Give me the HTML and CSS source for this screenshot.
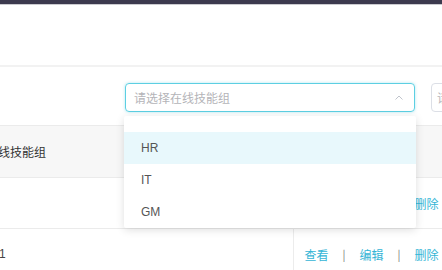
FILE: index.html
```html
<!DOCTYPE html>
<html lang="zh-CN">
<head>
<meta charset="UTF-8" />
<title>在线技能组</title>
<link rel="stylesheet" href="styles.css">
</head>
<body>

<div class="topbar"></div>
<div class="page-head"></div>
<div class="divider"></div>

<div class="toolbar">
  <div class="select open">
    <span class="placeholder">请选择在线技能组</span>
    <svg class="arrow" width="8" height="5" viewBox="0 0 8 5"><path d="M0.5 4.5 L4 1 L7.5 4.5" fill="none" stroke="#c0c4cc" stroke-width="1"/></svg>
    <ul class="dropdown">
      <li class="hover">HR</li>
      <li>IT</li>
      <li>GM</li>
    </ul>
  </div>
  <div class="input"><span class="placeholder">请输入</span></div>
</div>

<table class="grid">
  <tr class="head">
    <th class="col-name">在线技能组</th>
    <th class="col-ops">操作</th>
  </tr>
  <tr>
    <td class="col-name"></td>
    <td class="col-ops">
      <div class="ops"><a>查看</a><span class="sep">|</span><a>编辑</a><span class="sep">|</span><a>删除</a></div>
    </td>
  </tr>
  <tr>
    <td class="col-name"><span class="num">1</span></td>
    <td class="col-ops">
      <div class="ops"><a>查看</a><span class="sep">|</span><a>编辑</a><span class="sep">|</span><a>删除</a></div>
    </td>
  </tr>
</table>

</body>
</html>
```

FILE: styles.css
```css
body {
  margin: 0;
  width: 442px;
  height: 270px;
  overflow: hidden;
  background-color: #fff;
  font-family: "Liberation Sans", "Noto Sans CJK SC", sans-serif;
  font-size: 12px;
  color: #333;
}

.topbar {
  height: 4px;
  background-color: #3c3a4e;
  border-bottom: 1px solid #cbcbd0;
}

.page-head { height: 60px; background-color: #fff; }
.divider { height: 2px; background-color: #f2f2f2; }

.toolbar {
  display: flex;
  gap: 16px;
  padding: 16px 0 0 125px;
  height: 29px;
  position: relative;
  z-index: 5;
}

.select {
  position: relative;
  flex: 0 0 auto;
  box-sizing: border-box;
  width: 290px;
  height: 29px;
  border: 1px solid #5ccfe2;
  border-radius: 4px;
  box-shadow: 0 0 3px rgba(92, 207, 226, 0.5);
  display: flex;
  align-items: center;
  padding: 0 10px 0 8px;
}

.placeholder {
  color: #b4b4b8;
  white-space: nowrap;
  font-family: "Noto Sans CJK SC", sans-serif;
}

.select .placeholder { flex: 1; }
.arrow { margin-right: 1px; margin-top: -1px; }

.input {
  flex: 0 0 auto;
  box-sizing: border-box;
  width: 120px;
  height: 29px;
  border: 1px solid #dcdfe6;
  border-radius: 4px;
  display: flex;
  align-items: center;
  padding-left: 5px;
}

.dropdown {
  position: absolute;
  top: 32px;
  left: -2px;
  width: 292px;
  margin: 0;
  padding: 16px 0 0;
  list-style: none;
  background-color: #fff;
  box-shadow: 0 2px 8px rgba(0, 0, 0, 0.13);
  border-radius: 2px;
}

.dropdown li {
  height: 32px;
  line-height: 32px;
  padding-left: 17px;
  color: #555;
}

.dropdown li.hover { background-color: #e8f8fc; }

.grid {
  margin: 13px 0 0 -14px;
  border-collapse: collapse;
  width: 520px;
  table-layout: fixed;
}

.grid tr { border-top: 1px solid #ebebeb; }
.grid tr.head { background-color: #f7f7f7; height: 52px; }
.grid tr { height: 51px; }

.grid th {
  text-align: left;
  font-weight: normal;
  color: #333;
  font-family: "Noto Sans CJK SC", sans-serif;
  padding: 0;
}

.grid td { padding: 0; }

.col-name { width: 307px; }
.col-ops { padding-left: 11px !important; border-left: 1px solid #ececec; }
.head .col-ops { border-left: none; color: #f7f7f7 !important; }

.num { padding-left: 13px; color: #444; }

.ops {
  display: flex;
  align-items: center;
  gap: 14px;
  font-family: "Noto Sans CJK SC", sans-serif;
}

.ops a { color: #35b5d6; cursor: pointer; }
.ops .sep { color: #777; font-size: 11px; }
```
